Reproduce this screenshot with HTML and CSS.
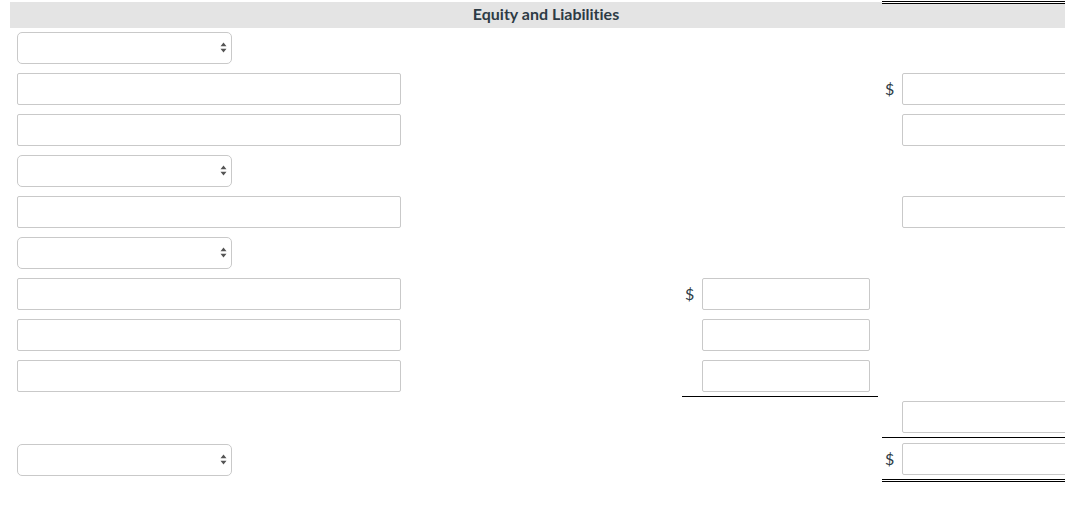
FILE: index.html
```html
<!DOCTYPE html>
<html>
<head>
<meta charset="utf-8">
<link rel="stylesheet" href="styles.css">
</head>
<body>
<div class="head">Equity and Liabilities</div>
<div class="sheet">
  <!-- row 1 -->
  <div class="c l"><div class="sel"><select></select><svg class="arr" width="7" height="11" viewBox="0 0 7 11"><path d="M0.5 4.2 L3.5 0.5 L6.5 4.2 Z M0.5 6.8 L3.5 10.5 L6.5 6.8 Z" fill="#555"/></svg></div></div>
  <div class="c m"></div>
  <div class="c r"></div>
  <!-- row 2 -->
  <div class="c l"><input class="txt wide" type="text"></div>
  <div class="c m"></div>
  <div class="c r"><span class="cur">$</span><input class="txt num" type="text"></div>
  <!-- row 3 -->
  <div class="c l"><input class="txt wide" type="text"></div>
  <div class="c m"></div>
  <div class="c r"><span class="cur"></span><input class="txt num" type="text"></div>
  <!-- row 4 -->
  <div class="c l"><div class="sel"><select></select><svg class="arr" width="7" height="11" viewBox="0 0 7 11"><path d="M0.5 4.2 L3.5 0.5 L6.5 4.2 Z M0.5 6.8 L3.5 10.5 L6.5 6.8 Z" fill="#555"/></svg></div></div>
  <div class="c m"></div>
  <div class="c r"></div>
  <!-- row 5 -->
  <div class="c l"><input class="txt wide" type="text"></div>
  <div class="c m"></div>
  <div class="c r"><span class="cur"></span><input class="txt num" type="text"></div>
  <!-- row 6 -->
  <div class="c l"><div class="sel"><select></select><svg class="arr" width="7" height="11" viewBox="0 0 7 11"><path d="M0.5 4.2 L3.5 0.5 L6.5 4.2 Z M0.5 6.8 L3.5 10.5 L6.5 6.8 Z" fill="#555"/></svg></div></div>
  <div class="c m"></div>
  <div class="c r"></div>
  <!-- row 7 -->
  <div class="c l"><input class="txt wide" type="text"></div>
  <div class="c m"><span class="cur">$</span><input class="txt num" type="text"></div>
  <div class="c r"></div>
  <!-- row 8 -->
  <div class="c l"><input class="txt wide" type="text"></div>
  <div class="c m"><span class="cur"></span><input class="txt num" type="text"></div>
  <div class="c r"></div>
  <!-- row 9 -->
  <div class="c l"><input class="txt wide" type="text"></div>
  <div class="c m single"><span class="cur"></span><input class="txt num" type="text"></div>
  <div class="c r"></div>
  <!-- row 10 -->
  <div class="c l"></div>
  <div class="c m"></div>
  <div class="c r single"><span class="cur"></span><input class="txt num" type="text"></div>
  <!-- row 11 -->
  <div class="c l last"><div class="sel"><select></select><svg class="arr" width="7" height="11" viewBox="0 0 7 11"><path d="M0.5 4.2 L3.5 0.5 L6.5 4.2 Z M0.5 6.8 L3.5 10.5 L6.5 6.8 Z" fill="#555"/></svg></div></div>
  <div class="c m last"></div>
  <div class="c r last double"><span class="cur">$</span><input class="txt num" type="text"></div>
</div>
</body>
</html>
```
FILE: styles.css
```css
html {
  overflow: hidden;
}
body {
  margin: 0;
  padding: 0 0 0 10px;
  font-family: Lato, "Noto Sans", sans-serif;
  color: #2d3b45;
  background: #fff;
}
.head {
  margin-top: 1px;
  width: 1072px;
  height: 27px;
  box-sizing: border-box;
  padding-top: 0;
  line-height: 26px;
  font-size: 16px;
  font-weight: 700;
  font-variant-ligatures: none;
  text-align: center;
  color: #2d3b45;
  background:
    linear-gradient(#000, #000) 872px 0 / 200px 1px no-repeat,
    linear-gradient(#fff, #fff) 872px 1px / 200px 1px no-repeat,
    linear-gradient(#000, #000) 872px 2px / 200px 1px no-repeat,
    linear-gradient(#e4e4e4, #e4e4e4) 0 1px / 100% 26px no-repeat;
}
.sheet {
  display: grid;
  width: 1072px;
  grid-template-columns: 668px 196px 200px;
  column-gap: 4px;
}
.c {
  display: flex;
  align-items: center;
  height: 41px;
  box-sizing: border-box;
  padding: 4px 0 5px;
}
.l {
  padding-left: 7px;
}
.last {
  height: 44px;
  padding-top: 5px;
}
.single {
  border-bottom: 1px solid #000;
  padding-bottom: 4px;
}
.double {
  border-bottom: 3px double #000;
  padding-bottom: 4px;
}
.cur {
  width: 20px;
  flex: none;
  box-sizing: border-box;
  padding-left: 3px;
  text-align: left;
  font-size: 16px;
  line-height: 32px;
  color: #2d3b45;
}
.txt {
  box-sizing: border-box;
  height: 32px;
  margin: 0;
  padding: 0 6px;
  border: 1px solid #c9c9c9;
  border-radius: 2px;
  background: #fff;
  font-family: Lato, sans-serif;
  font-size: 14px;
  outline: none;
}
.wide {
  width: 384px;
}
.num {
  width: 168px;
  flex: none;
}
.sel {
  position: relative;
  width: 215px;
  height: 32px;
}
.sel select {
  -webkit-appearance: none;
  appearance: none;
  display: block;
  width: 215px;
  height: 32px;
  margin: 0;
  box-sizing: border-box;
  border: 1px solid #c9c9c9;
  border-radius: 5px;
  background: #fff;
  font-family: Lato, sans-serif;
  font-size: 14px;
  outline: none;
}
.arr {
  position: absolute;
  right: 5px;
  top: 10px;
  pointer-events: none;
}
```
